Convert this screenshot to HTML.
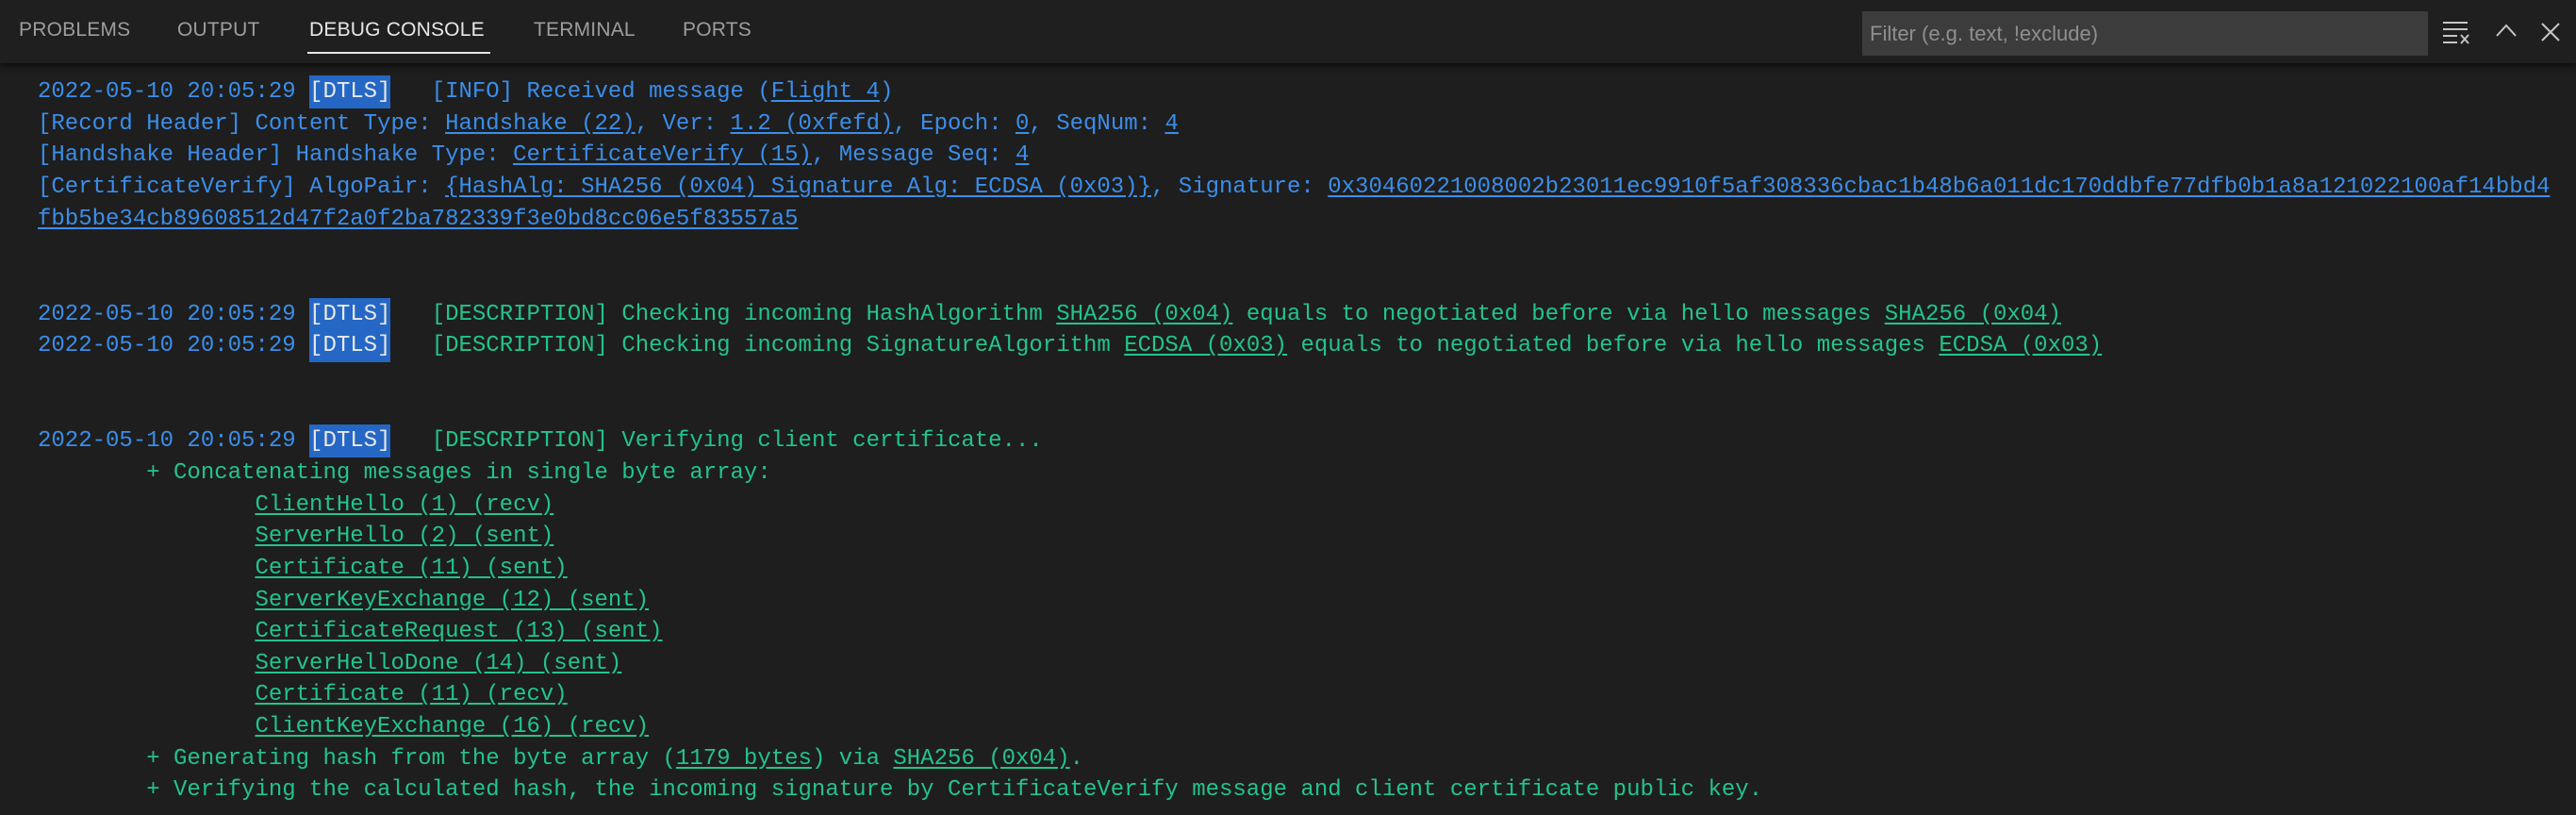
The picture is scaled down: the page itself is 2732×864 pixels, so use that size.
<!DOCTYPE html>
<html><head><meta charset="utf-8"><style>
html,body{margin:0;padding:0;background:#1e1e1e;width:2732px;height:864px;overflow:hidden}
.bar{position:absolute;left:0;top:0;width:2732px;height:67px;background:#1f1f1f;box-shadow:0 3px 6px rgba(0,0,0,.55)}
.tab{position:absolute;top:20px;font:21px "Liberation Sans",sans-serif;color:#9d9d9d;letter-spacing:0.2px}
.tab.act{color:#e7e7e7}
.ul{position:absolute;left:326px;top:55px;width:194px;height:2px;background:#e7e7e7}
.filter{position:absolute;left:1975px;top:12px;width:600px;height:47px;background:#3c3c3c;font:22px "Liberation Sans",sans-serif;color:#8f8f8f;line-height:47px;padding-left:8px;box-sizing:border-box}
.c{position:absolute;left:40px;top:81px;font:24px/33.67px "Liberation Mono",monospace;color:#3b8eea}
.c div{height:33.67px;white-space:pre}
.g{color:#23c48b}
u{text-decoration:underline;text-underline-offset:3px}
.d{background:#2567c4;color:#e8e8e8;padding:4px 0}
</style></head><body>
<div class="bar">
<span class="tab" style="left:20px">PROBLEMS</span>
<span class="tab" style="left:188px">OUTPUT</span>
<span class="tab act" style="left:328px">DEBUG CONSOLE</span>
<span class="tab" style="left:566px">TERMINAL</span>
<span class="tab" style="left:724px">PORTS</span>
<div class="ul"></div>
<div class="filter">Filter (e.g. text, !exclude)</div>
<svg style="position:absolute;left:2590px;top:22px" width="32" height="26" viewBox="0 0 32 26" fill="none" stroke="#c5c5c5" stroke-width="2"><path d="M1 2H27M1 9H27M1 16H16M1 23H16M20 15L28 24M28 15L20 24"/></svg>
<svg style="position:absolute;left:2646px;top:24px" width="24" height="16" viewBox="0 0 24 16" fill="none" stroke="#c5c5c5" stroke-width="2"><path d="M2 14L12 3L22 14"/></svg>
<svg style="position:absolute;left:2694px;top:23px" width="22" height="22" viewBox="0 0 22 22" fill="none" stroke="#c5c5c5" stroke-width="2"><path d="M2 2L20 20M20 2L2 20"/></svg>
</div>
<div class="c"><div>2022-05-10 20:05:29 <span class="d">[DTLS]</span>   [INFO] Received message (<u>Flight 4</u>)</div><div>[Record Header] Content Type: <u>Handshake (22)</u>, Ver: <u>1.2 (0xfefd)</u>, Epoch: <u>0</u>, SeqNum: <u>4</u></div><div>[Handshake Header] Handshake Type: <u>CertificateVerify (15)</u>, Message Seq: <u>4</u></div><div>[CertificateVerify] AlgoPair: <u>{HashAlg: SHA256 (0x04) Signature Alg: ECDSA (0x03)}</u>, Signature: <u>0x30460221008002b23011ec9910f5af308336cbac1b48b6a011dc170ddbfe77dfb0b1a8a121022100af14bbd4</u></div><div><u>fbb5be34cb89608512d47f2a0f2ba782339f3e0bd8cc06e5f83557a5</u></div><div></div><div></div><div>2022-05-10 20:05:29 <span class="d">[DTLS]</span>   <span class="g">[DESCRIPTION] Checking incoming HashAlgorithm <u>SHA256 (0x04)</u> equals to negotiated before via hello messages <u>SHA256 (0x04)</u></span></div><div>2022-05-10 20:05:29 <span class="d">[DTLS]</span>   <span class="g">[DESCRIPTION] Checking incoming SignatureAlgorithm <u>ECDSA (0x03)</u> equals to negotiated before via hello messages <u>ECDSA (0x03)</u></span></div><div></div><div></div><div>2022-05-10 20:05:29 <span class="d">[DTLS]</span>   <span class="g">[DESCRIPTION] Verifying client certificate...</span></div><div class="g">        + Concatenating messages in single byte array:</div><div class="g">                <u>ClientHello (1) (recv)</u></div><div class="g">                <u>ServerHello (2) (sent)</u></div><div class="g">                <u>Certificate (11) (sent)</u></div><div class="g">                <u>ServerKeyExchange (12) (sent)</u></div><div class="g">                <u>CertificateRequest (13) (sent)</u></div><div class="g">                <u>ServerHelloDone (14) (sent)</u></div><div class="g">                <u>Certificate (11) (recv)</u></div><div class="g">                <u>ClientKeyExchange (16) (recv)</u></div><div class="g">        + Generating hash from the byte array (<u>1179 bytes</u>) via <u>SHA256 (0x04)</u>.</div><div class="g">        + Verifying the calculated hash, the incoming signature by CertificateVerify message and client certificate public key.</div></div>
</body></html>
